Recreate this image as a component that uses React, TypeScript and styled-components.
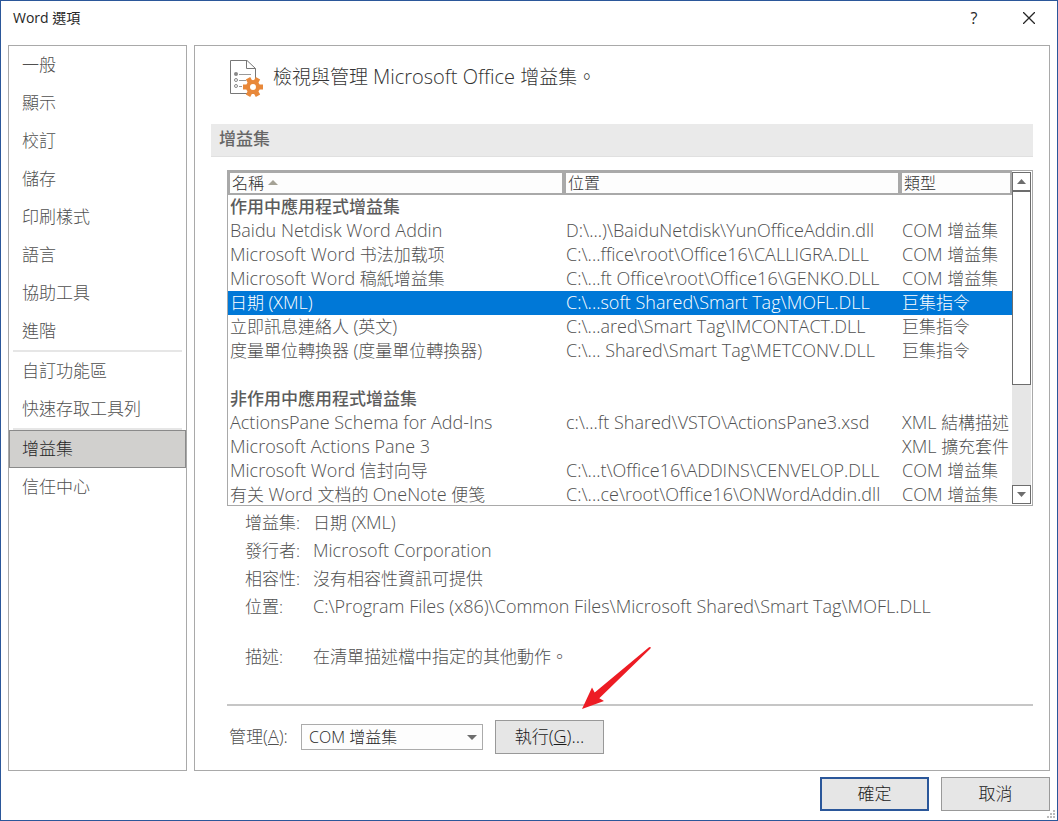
import React from 'react';
import styled, { createGlobalStyle, css } from 'styled-components';

const line = '#a9a9a9';
const accent = '#2b579a';

const GlobalStyle = createGlobalStyle`
  *, *::before, *::after { box-sizing: border-box; }
  body {
    margin: 0;
    background: #fff;
    color: #505050;
    font: 300 17px/24px "Open Sans", "Noto Sans CJK TC", sans-serif;
  }
  button, select { font: inherit; color: inherit; }
`;

const Dialog = styled.div`
  position: relative;
  display: flex;
  flex-direction: column;
  min-height: 100vh;
  border: 1px solid ${accent};
`;

const TitleBar = styled.header`
  display: flex;
  align-items: center;
  height: 44px;
  padding: 0 18px 10px 12px;
  color: #262626;
`;

const Title = styled.h1`
  flex: 1;
  margin: 0;
  font-size: 14px;
  font-weight: 400;
`;

const CaptionButton = styled.button`
  display: grid;
  place-items: center;
  width: 20px;
  height: 20px;
  margin-left: 35px;
  padding: 0;
  border: 0;
  background: none;
  font-size: 16px;
  font-weight: 400;
  line-height: 20px;
`;

const Content = styled.div`
  display: flex;
  flex: 1;
  gap: 7px;
  padding: 0 7px;
`;

const Sidebar = styled.nav`
  flex: 0 0 179px;
  border: 1px solid ${line};
`;

const NavButton = styled.button<{ $active?: boolean }>`
  display: block;
  width: 100%;
  height: 38px;
  padding: 0 12px;
  border: 1px solid transparent;
  background: none;
  text-align: left;
  ${({ $active }) =>
    $active &&
    css`
      border-color: #8a8a8a;
      background: #d1d0ce;
      color: #262626;
    `}
`;

const NavDivider = styled.hr`
  height: 2px;
  margin: 0 4px;
  border: 0;
  background: #e6e6e6;
`;

const Panel = styled.main`
  flex: 1;
  min-width: 0;
  padding: 13px 16px 16px;
  border: 1px solid ${line};
`;

const PanelHeader = styled.div`
  display: flex;
  align-items: center;
  gap: 10px;
  height: 38px;
  padding-left: 18px;
  color: #333;
`;

const PanelTitle = styled.h2`
  margin: 0;
  padding-bottom: 2px;
  font-size: 19px;
  font-weight: 300;
`;

const SectionTitle = styled.h3`
  height: 33px;
  margin: 27px 0 13px;
  padding: 3px 8px;
  border-bottom: 1px solid #e0e0e0;
  background: #eaeaea;
  color: #666;
  font-size: 17px;
  font-weight: 500;
`;

const Section = styled.section`
  margin-left: 16px;
`;

const ListBox = styled.div`
  display: flex;
  height: 336px;
  border: 1px solid ${line};
`;

const ListViewport = styled.div`
  flex: 1;
  min-width: 0;
  overflow: hidden;
`;

const Table = styled.table`
  width: 100%;
  table-layout: fixed;
  border-collapse: separate;
  border-spacing: 0;
`;

const HeadCell = styled.th<{ $width?: number }>`
  width: ${({ $width }) => ($width ? `${$width}px` : 'auto')};
  height: 24px;
  padding: 0 2px;
  border: 2px solid ${line};
  background: #fdfdfd;
  color: #333;
  font-size: 16px;
  font-weight: 300;
  line-height: 20px;
  text-align: left;
`;

const SortArrow = styled.svg`
  margin-left: 4px;
  vertical-align: 4px;
`;

const Row = styled.tr<{ $selected?: boolean }>`
  height: 24px;
  ${({ $selected }) =>
    $selected &&
    css`
      background: #0078d7;
      color: #fff;
    `}
`;

const Cell = styled.td`
  height: 24px;
  padding: 0 2px;
  overflow: hidden;
  line-height: 24px;
  white-space: nowrap;
`;

const GroupCell = styled.th`
  height: 24px;
  padding: 0 2px;
  color: #5c5c5c;
  font-weight: 500;
  line-height: 24px;
  text-align: left;
`;

const ScrollBar = styled.div`
  display: flex;
  flex-direction: column;
  width: 20px;
  padding: 1px 1px 1px 0;
`;

const ScrollTrack = styled.div`
  flex: 1;
  background: #e6e6e6;
`;

const ScrollThumb = styled.div`
  height: 194px;
  border: 1px solid #6d6d6d;
  background: #fff;
`;

const ScrollButton = styled.button`
  display: grid;
  place-items: center;
  height: 19px;
  padding: 0;
  border: 1px solid #6d6d6d;
  background: #fff;
`;

const Details = styled.dl`
  display: grid;
  grid-template-columns: 68px 1fr;
  margin: 3px 0 33px;
  padding-left: 18px;
  line-height: 28px;
`;

const Term = styled.dt<{ $spaced?: boolean }>`
  margin-top: ${({ $spaced }) => ($spaced ? '22px' : '0')};
`;

const Value = styled.dd<{ $spaced?: boolean }>`
  margin: ${({ $spaced }) => ($spaced ? '22px 0 0' : '0')};
`;

const ManageBar = styled.div`
  position: relative;
  display: flex;
  align-items: center;
  padding: 14px 0 0 2px;
  border-top: 2px solid #c6c6c6;
`;

const ManageLabel = styled.label`
  width: 72px;
  white-space: nowrap;
`;

const SelectBox = styled.div`
  position: relative;
  width: 182px;
  margin-right: 12px;
`;

const Select = styled.select`
  display: block;
  appearance: none;
  width: 100%;
  height: 26px;
  padding: 0 24px 0 7px;
  border: 1px solid #ababab;
  border-radius: 0;
  background: #fdfdfd;
  color: #262626;
  font-size: 16px;
  line-height: 24px;
`;

const SelectArrow = styled.svg`
  position: absolute;
  top: 11px;
  right: 6px;
  pointer-events: none;
`;

const Pointer = styled.svg`
  position: absolute;
  left: 354px;
  top: -60px;
  pointer-events: none;
`;

const PushButton = styled.button<{ $primary?: boolean }>`
  width: 109px;
  height: 34px;
  padding: 0;
  border: ${({ $primary }) => ($primary ? `2px solid ${accent}` : '1px solid #999')};
  background: #e6e6e6;
  color: #1a1a1a;
`;

const Footer = styled.footer`
  display: flex;
  justify-content: flex-end;
  gap: 12px;
  padding: 6px 7px 9px;
`;

const ResizeGrip = styled.svg`
  position: absolute;
  right: 2px;
  bottom: 2px;
`;

/* Latin runs are set one pixel larger than the Chinese text beside them. */
const Latin = styled.span<{ $size?: number }>`
  font-size: ${({ $size = 18 }) => $size}px;
  line-height: 1;
`;

const Mixed = ({ text, size }: { text: string; size?: number }) => (
  <>
    {text.split(/([\x21-\x7e][\x20-\x7e]*)/).map((run, i) =>
      i % 2 ? <Latin key={i} $size={size}>{run}</Latin> : run
    )}
  </>
);

type Entry = { name: string; location?: string; type?: string; group?: boolean; selected?: boolean };

const entries: Entry[] = [
  { name: '作用中應用程式增益集', group: true },
  { name: 'Baidu Netdisk Word Addin', location: 'D:\\...)\\BaiduNetdisk\\YunOfficeAddin.dll', type: 'COM 增益集' },
  { name: 'Microsoft Word 书法加载项', location: 'C:\\...ffice\\root\\Office16\\CALLIGRA.DLL', type: 'COM 增益集' },
  { name: 'Microsoft Word 稿紙增益集', location: 'C:\\...ft Office\\root\\Office16\\GENKO.DLL', type: 'COM 增益集' },
  { name: '日期 (XML)', location: 'C:\\...soft Shared\\Smart Tag\\MOFL.DLL', type: '巨集指令', selected: true },
  { name: '立即訊息連絡人 (英文)', location: 'C:\\...ared\\Smart Tag\\IMCONTACT.DLL', type: '巨集指令' },
  { name: '度量單位轉換器 (度量單位轉換器)', location: 'C:\\... Shared\\Smart Tag\\METCONV.DLL', type: '巨集指令' },
  { name: '' },
  { name: '非作用中應用程式增益集', group: true },
  { name: 'ActionsPane Schema for Add-Ins', location: 'c:\\...ft Shared\\VSTO\\ActionsPane3.xsd', type: 'XML 結構描述' },
  { name: 'Microsoft Actions Pane 3', type: 'XML 擴充套件' },
  { name: 'Microsoft Word 信封向导', location: 'C:\\...t\\Office16\\ADDINS\\CENVELOP.DLL', type: 'COM 增益集' },
  { name: '有关 Word 文档的 OneNote 便笺', location: 'C:\\...ce\\root\\Office16\\ONWordAddin.dll', type: 'COM 增益集' },
];

const navGroups = [
  ['一般', '顯示', '校訂', '儲存', '印刷樣式', '語言', '協助工具', '進階'],
  ['自訂功能區', '快速存取工具列'],
  ['增益集', '信任中心'],
];

const details = [
  ['增益集:', '日期 (XML)'],
  ['發行者:', 'Microsoft Corporation'],
  ['相容性:', '沒有相容性資訊可提供'],
  ['位置:', 'C:\\Program Files (x86)\\Common Files\\Microsoft Shared\\Smart Tag\\MOFL.DLL'],
  ['描述:', '在清單描述檔中指定的其他動作。'],
];

const AddInsIcon = () => (
  <svg width="34" height="38" viewBox="0 0 34 38" fill="none" aria-hidden="true">
    <path d="M1.5 1.5H18L26.500 9.500V34.500H1.500Z" fill="#fff" stroke="#777" />
    <path d="M17.500 1.500V9.500H26.500" stroke="#777" />
    <path d="M10 15.500H22M10 21.500H17M10 27.500H13" stroke="#999" />
    <circle cx="7" cy="15" r="2" fill="#888" />
    <circle cx="7" cy="21" r="1.500" stroke="#888" />
    <circle cx="7" cy="27" r="1.500" stroke="#888" />
    <g fill="#e8883a">
      {[0, 60, 120].map((angle) => (
        <rect key={angle} x="21.500" y="18" width="5" height="20" transform={`rotate(${angle + 30} 24 28)`} />
      ))}
      <circle cx="24" cy="28" r="7" />
    </g>
    <circle cx="24" cy="28" r="3" fill="#fff" />
  </svg>
);

export default function App() {
  return (
    <Dialog lang="zh-Hant">
      <GlobalStyle />
      <TitleBar>
        <Title>Word 選項</Title>
        <CaptionButton aria-label="說明">?</CaptionButton>
        <CaptionButton aria-label="關閉">
          <svg width="12" height="12" viewBox="0 0 12 12" stroke="#262626" strokeWidth="1.3">
            <path d="M0 0L12 12M12 0L0 12" />
          </svg>
        </CaptionButton>
      </TitleBar>
      <Content>
        <Sidebar>
          {navGroups.map((group, i) => (
            <React.Fragment key={i}>
              {i > 0 && <NavDivider />}
              {group.map((item) => (
                <NavButton key={item} $active={item === '增益集'}>{item}</NavButton>
              ))}
            </React.Fragment>
          ))}
        </Sidebar>
        <Panel>
          <PanelHeader>
            <AddInsIcon />
            <PanelTitle><Mixed text="檢視與管理 Microsoft Office 增益集。" size={20} /></PanelTitle>
          </PanelHeader>
          <SectionTitle>增益集</SectionTitle>
          <Section>
            <ListBox>
              <ListViewport>
                <Table>
                  <thead>
                    <tr>
                      <HeadCell>
                        名稱
                        <SortArrow width="10" height="5" viewBox="0 0 10 5">
                          <path d="M5 0L10 5H0Z" fill="#a5a296" />
                        </SortArrow>
                      </HeadCell>
                      <HeadCell>位置</HeadCell>
                      <HeadCell $width={112}>類型</HeadCell>
                    </tr>
                  </thead>
                  <tbody>
                    {entries.map((entry, i) =>
                      entry.group ? (
                        <Row key={i}>
                          <GroupCell colSpan={3}>{entry.name}</GroupCell>
                        </Row>
                      ) : (
                        <Row key={i} $selected={entry.selected}>
                          <Cell><Mixed text={entry.name} /></Cell>
                          <Cell><Mixed text={entry.location ?? ''} /></Cell>
                          <Cell><Mixed text={entry.type ?? ''} /></Cell>
                        </Row>
                      )
                    )}
                  </tbody>
                </Table>
              </ListViewport>
              <ScrollBar>
                <ScrollButton aria-label="向上捲動">
                  <svg width="9" height="5" viewBox="0 0 9 5"><path d="M4.500 0L9 5H0Z" fill="#6d6d6d" /></svg>
                </ScrollButton>
                <ScrollTrack>
                  <ScrollThumb />
                </ScrollTrack>
                <ScrollButton aria-label="向下捲動">
                  <svg width="9" height="5" viewBox="0 0 9 5"><path d="M4.500 5L9 0H0Z" fill="#6d6d6d" /></svg>
                </ScrollButton>
              </ScrollBar>
            </ListBox>
            <Details>
              {details.map(([term, value], i) => (
                <React.Fragment key={term}>
                  <Term $spaced={i === 4}>{term}</Term>
                  <Value $spaced={i === 4}><Mixed text={value} /></Value>
                </React.Fragment>
              ))}
            </Details>
            <ManageBar>
              <ManageLabel htmlFor="manage">管理<Latin>(<u>A</u>):</Latin></ManageLabel>
              <SelectBox>
                <Select id="manage">
                  <option>COM 增益集</option>
                </Select>
                <SelectArrow width="10" height="5" viewBox="0 0 10 5">
                  <path d="M0 0H10L5 5Z" fill="#6d6d6d" />
                </SelectArrow>
              </SelectBox>
              <PushButton>執行<Latin>(<u>G</u>)...</Latin></PushButton>
              <Pointer width="72" height="66" viewBox="0 0 72 66" aria-hidden="true">
                <path d="M1 63L11 41.500L13.700 46.500L68 1.200Q70.500 0.500 69.500 2.500L18.300 52.300L23 55Z" fill="#ed1c24" />
              </Pointer>
            </ManageBar>
          </Section>
        </Panel>
      </Content>
      <Footer>
        <PushButton $primary>確定</PushButton>
        <PushButton>取消</PushButton>
      </Footer>
      <ResizeGrip width="8" height="8" viewBox="0 0 8 8" fill="#bbb" aria-hidden="true">
        <path d="M6 0h2v2H6zM3 3h2v2H3zM6 3h2v2H6zM0 6h2v2H0zM3 6h2v2H3zM6 6h2v2H6z" />
      </ResizeGrip>
    </Dialog>
  );
}
